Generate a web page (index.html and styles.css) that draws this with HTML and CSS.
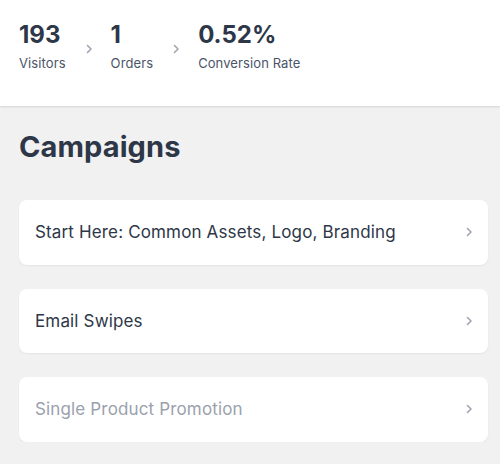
FILE: index.html
```html
<!DOCTYPE html>
<html lang="en">
<head>
  <meta charset="UTF-8" />
  <meta name="viewport" content="width=device-width, initial-scale=1.0"/>
  <title>Campaigns</title>
  <link rel="stylesheet" href="styles.css">
</head>
<body>

<div class="stats-bar">
  <div class="stat">
    <div class="stat-value">193</div>
    <div class="stat-label">Visitors</div>
  </div>
  <svg class="stat-arrow" width="7" height="10" viewBox="0 0 7 10"><path d="M1.5 1.5 L5 5 L1.5 8.5" fill="none" stroke="#a0a6b1" stroke-width="1.6" stroke-linecap="round" stroke-linejoin="round"/></svg>
  <div class="stat">
    <div class="stat-value">1</div>
    <div class="stat-label">Orders</div>
  </div>
  <svg class="stat-arrow" width="7" height="10" viewBox="0 0 7 10"><path d="M1.5 1.5 L5 5 L1.5 8.5" fill="none" stroke="#a0a6b1" stroke-width="1.6" stroke-linecap="round" stroke-linejoin="round"/></svg>
  <div class="stat">
    <div class="stat-value">0.52%</div>
    <div class="stat-label">Conversion Rate</div>
  </div>
</div>

<div class="campaigns">
  <h1>Campaigns</h1>
  <div class="campaign-list">
    <div class="campaign">
      <span>Start Here: Common Assets, Logo, Branding</span>
      <svg width="7" height="10" viewBox="0 0 7 10"><path d="M1.5 1.5 L5 5 L1.5 8.5" fill="none" stroke="#a0a6b1" stroke-width="1.6" stroke-linecap="round" stroke-linejoin="round"/></svg>
    </div>
    <div class="campaign">
      <span>Email Swipes</span>
      <svg width="7" height="10" viewBox="0 0 7 10"><path d="M1.5 1.5 L5 5 L1.5 8.5" fill="none" stroke="#a0a6b1" stroke-width="1.6" stroke-linecap="round" stroke-linejoin="round"/></svg>
    </div>
    <div class="campaign disabled">
      <span>Single Product Promotion</span>
      <svg width="7" height="10" viewBox="0 0 7 10"><path d="M1.5 1.5 L5 5 L1.5 8.5" fill="none" stroke="#a0a6b1" stroke-width="1.6" stroke-linecap="round" stroke-linejoin="round"/></svg>
    </div>
  </div>
</div>

</body>
</html>
```

FILE: styles.css
```css
* {
  margin: 0;
  padding: 0;
  box-sizing: border-box;
}
body {
  font-family: Inter, 'Noto Sans', sans-serif;
  background-color: #f1f1f1;
  color: #2d3748;
  overflow: hidden;
}

.stats-bar {
  display: flex;
  align-items: center;
  height: 106px;
  padding: 0 19px 16px;
  background: #fff;
  box-shadow: 0 1px 2px rgba(0,0,0,0.12);
}
.stat-value {
  font-size: 24px;
  font-weight: 700;
  line-height: 29px;
  color: #2d3748;
}
.stat-label {
  margin-top: 6px;
  font-size: 13px;
  line-height: 16px;
  letter-spacing: 0.1px;
  color: #4a5568;
}
.stat-arrow {
  margin: 8px 18px 0 20px;
}

.campaigns {
  padding: 0 12px 0 19px;
}
h1 {
  margin-top: 24px;
  font-size: 29px;
  line-height: 34px;
  font-weight: 700;
  letter-spacing: 0.1px;
  color: #2d3748;
}
.campaign-list {
  margin-top: 36px;
  display: flex;
  flex-direction: column;
  gap: 24px;
}
.campaign {
  display: flex;
  align-items: center;
  justify-content: space-between;
  height: 64.5px;
  padding: 0 15px 0 16px;
  background: #fff;
  border-radius: 8px;
  box-shadow: 0 1px 2px rgba(0,0,0,0.06);
  font-size: 17px;
  letter-spacing: 0.15px;
  color: #2d3748;
  cursor: pointer;
}
.campaign.disabled {
  color: #9aa1ad;
}
```
